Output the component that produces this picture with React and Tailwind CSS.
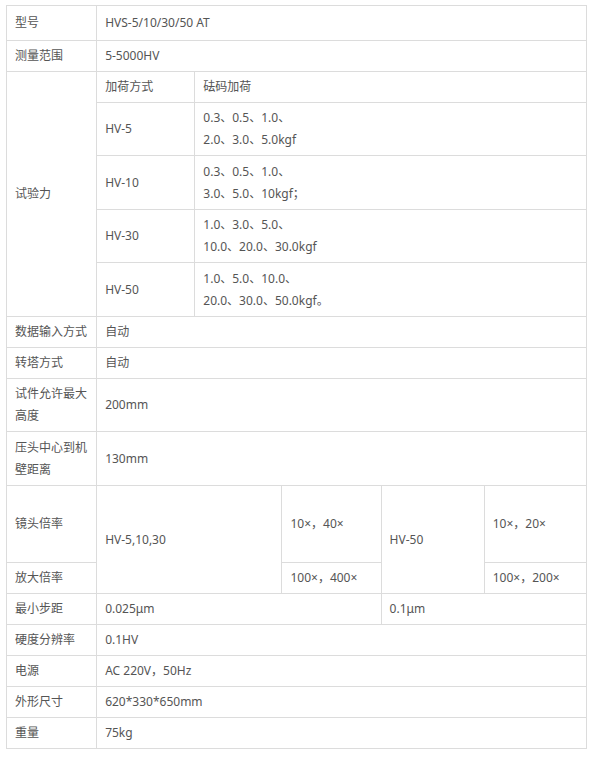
const cell = 'border border-[#dcdcdc] px-2 py-1 align-middle';

const simpleRows = [
  ['数据输入方式', '自动', 'h-[31px]'],
  ['转塔方式', '自动', 'h-[31px]'],
  ['试件允许最大高度', '200mm', 'h-[53px]'],
  ['压头中心到机壁距离', '130mm', 'h-[54px]'],
];

const tailRows = [
  ['硬度分辨率', '0.1HV'],
  ['电源', 'AC 220V，50Hz'],
  ['外形尺寸', '620*330*650mm'],
  ['重量', '75kg'],
];

const loads = [
  ['HV-5', ['0.3、0.5、1.0、', '2.0、3.0、5.0kgf'], 'h-[53px]'],
  ['HV-10', ['0.3、0.5、1.0、', '3.0、5.0、10kgf；'], 'h-[54px]'],
  ['HV-30', ['1.0、3.0、5.0、', '10.0、20.0、30.0kgf'], 'h-[53px]'],
  ['HV-50', ['1.0、5.0、10.0、', '20.0、30.0、50.0kgf。'], 'h-[54px]'],
];

const App = () => {
  return (
    <div
      className="min-h-[757px] bg-white pt-[5px] pl-[6px] text-[12px] leading-[22px] text-[#555]"
      style={{ fontFamily: '"Noto Sans", "Noto Sans CJK SC", sans-serif' }}
    >
      <table className="w-[581px] table-fixed border-collapse">
        <colgroup>
          <col className="w-[90px]" />
          <col className="w-[98px]" />
          <col className="w-[87px]" />
          <col className="w-[99px]" />
          <col className="w-[103px]" />
          <col className="w-[102px]" />
        </colgroup>
        <tbody>
          <tr className="h-[35px]">
            <td className={cell}>型号</td>
            <td className={cell} colSpan={5}>HVS-5/10/30/50 AT</td>
          </tr>
          <tr className="h-[31px]">
            <td className={cell}>测量范围</td>
            <td className={cell} colSpan={5}>5-5000HV</td>
          </tr>
          <tr className="h-[31px]">
            <td className={cell} rowSpan={5}>试验力</td>
            <td className={cell}>加荷方式</td>
            <td className={cell} colSpan={4}>砝码加荷</td>
          </tr>
          {loads.map(([name, lines, h]) => (
            <tr key={name} className={h}>
              <td className={cell}>{name}</td>
              <td className={cell} colSpan={4}>
                {lines[0]}
                <br />
                {lines[1]}
              </td>
            </tr>
          ))}
          {simpleRows.map(([label, value, h]) => (
            <tr key={label} className={h}>
              <td className={cell}>{label}</td>
              <td className={cell} colSpan={5}>{value}</td>
            </tr>
          ))}
          <tr className="h-[77px]">
            <td className={cell}>镜头倍率</td>
            <td className={cell} colSpan={2} rowSpan={2}>HV-5,10,30</td>
            <td className={cell}>10×，40×</td>
            <td className={cell} rowSpan={2}>HV-50</td>
            <td className={cell}>10×，20×</td>
          </tr>
          <tr className="h-[30px]">
            <td className={`${cell} py-0`}>放大倍率</td>
            <td className={`${cell} py-0`}>100×，400×</td>
            <td className={`${cell} py-0`}>100×，200×</td>
          </tr>
          <tr className="h-[31px]">
            <td className={cell}>最小步距</td>
            <td className={cell} colSpan={3}>0.025μm</td>
            <td className={cell} colSpan={2}>0.1μm</td>
          </tr>
          {tailRows.map(([label, value]) => (
            <tr key={label} className="h-[31px]">
              <td className={cell}>{label}</td>
              <td className={cell} colSpan={5}>{value}</td>
            </tr>
          ))}
        </tbody>
      </table>
    </div>
  );
};

export default App;
